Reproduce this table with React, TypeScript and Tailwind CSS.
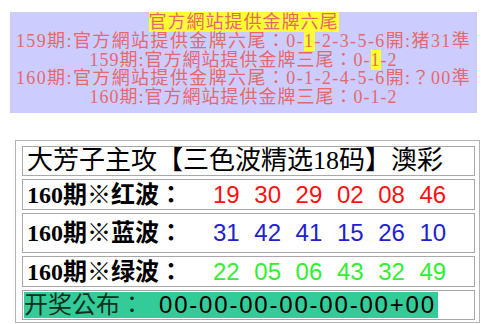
const serif = "font-['Liberation_Serif','Noto_Sans_CJK_TC',serif]";

const Hl = ({ children }: { children: React.ReactNode }) => <span className="bg-[#ffff33]">{children}</span>;

const WaveRow = ({ label, nums, color, h }: { label: string; nums: string[]; color: string; h: string }) => (
  <div className={`flex items-center border border-[#a8a8a8] pl-[4px] ${h}`}>
    <span className={`w-[186px] text-[24px] leading-none font-bold text-black whitespace-nowrap ${serif}`}>{label}</span>
    <div className={`flex gap-[14.6px] text-[24px] leading-none font-['Liberation_Sans',sans-serif] ${color}`}>
      {nums.map((n, i) => (
        <span key={i}>{n}</span>
      ))}
    </div>
  </div>
);

export default function App() {
  return (
    <div className="w-[483px] h-[324px] bg-white overflow-hidden pt-[12px]">
      {/* top notice panel */}
      <div
        className={`ml-[10px] mr-[6px] h-[101px] bg-[#ccccff] text-center text-[18px] leading-[18.8px] text-[#e6686c] tracking-[1px] pt-[1px] ${serif}`}
      >
        <div>
          <span className="bg-[#ffff33]">官方網站提供金牌六尾</span>
        </div>
        <div className="tracking-[1.4px] whitespace-nowrap">
          159期:官方網站提供金牌六尾：0-<Hl>1</Hl>-2-3-5-6開:猪31準
        </div>
        <div>
          159期:官方網站提供金牌三尾：0-<Hl>1</Hl>-2
        </div>
        <div className="tracking-[1.4px] whitespace-nowrap">160期:官方網站提供金牌六尾：0-1-2-4-5-6開:？00準</div>
        <div>160期:官方網站提供金牌三尾：0-1-2</div>
      </div>

      {/* wave table */}
      <div className="ml-[15px] mr-[3px] mt-[27px] border border-[#b4b4b4] pl-[6px] pr-[4px] pt-[5px] pb-[2px] flex flex-col gap-[3px]">
        <div className="flex items-center h-[30px] border border-[#a8a8a8] pl-[4px] overflow-hidden">
          <span className={`text-[26px] text-black leading-none whitespace-nowrap ${serif}`}>
            大芳子主攻【三色波精选18码】澳彩
          </span>
        </div>
        <WaveRow label="160期※红波：" nums={["19", "30", "29", "02", "08", "46"]} color="text-[#ff1010]" h="h-[31px]" />
        <WaveRow label="160期※蓝波：" nums={["31", "42", "41", "15", "26", "10"]} color="text-[#2222cc]" h="h-[40px]" />
        <WaveRow label="160期※绿波：" nums={["22", "05", "06", "43", "32", "49"]} color="text-[#33ee33]" h="h-[31px]" />
        <div className="flex items-stretch h-[30px] border border-[#a8a8a8] p-[1px]">
          <span className="flex items-center bg-[#33cc99] pr-[2px] text-[24px] leading-none">
            <span className={`w-[135px] text-[#0f2f20] ${serif}`}>开奖公布：</span>
            <span className="tracking-[1.8px] text-black font-['Liberation_Sans',sans-serif]">00-00-00-00-00-00+00</span>
          </span>
        </div>
      </div>
    </div>
  );
}
